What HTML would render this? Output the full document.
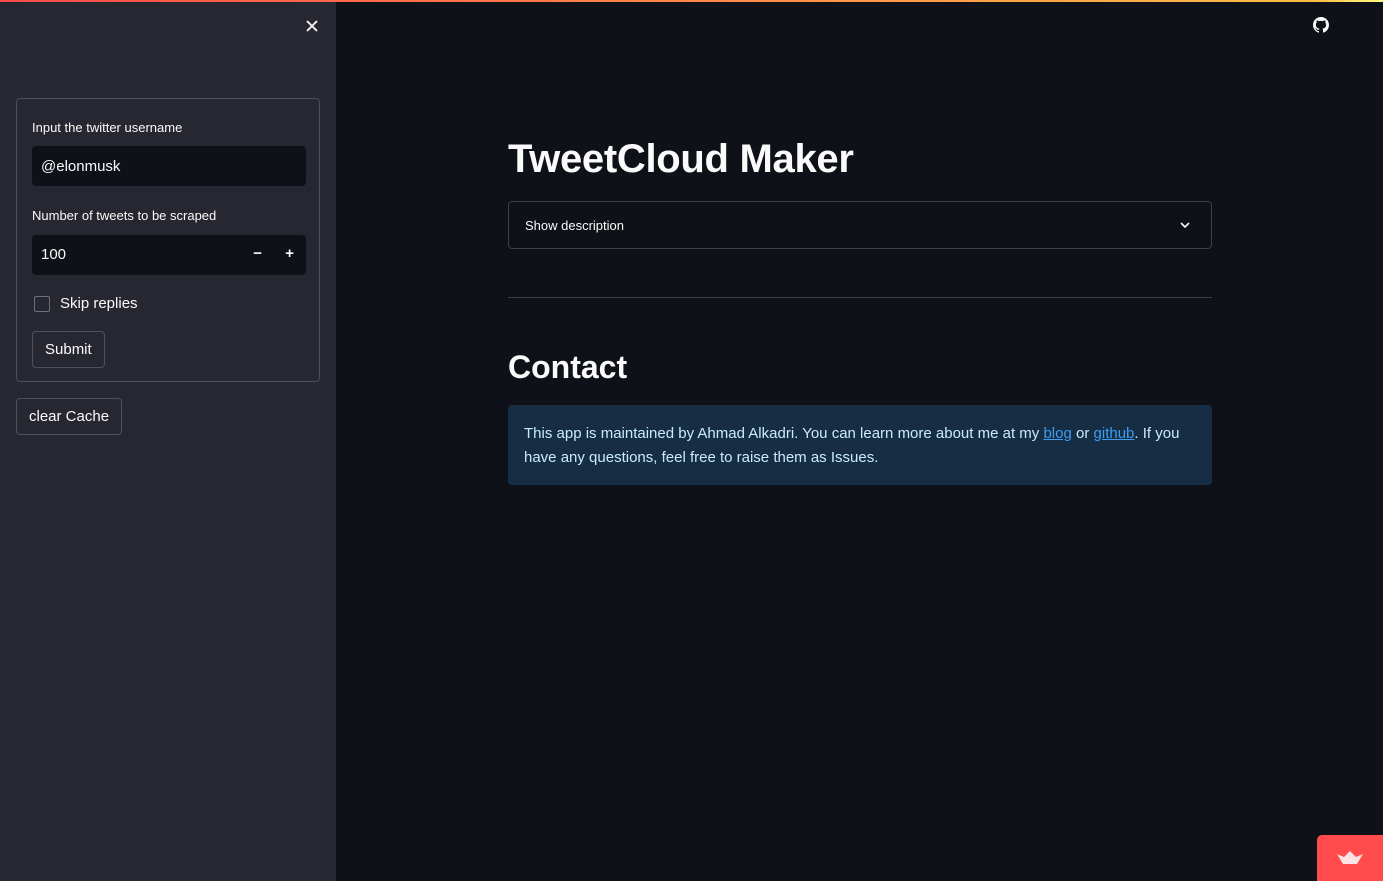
<!DOCTYPE html>
<html><head><meta charset="utf-8"><style>
*{box-sizing:border-box;margin:0;padding:0}
body{width:1383px;height:881px;overflow:hidden;background:#0e1117;font-family:"Liberation Sans",sans-serif;color:#fafafa;position:relative}
.top{position:absolute;top:0;left:0;right:0;height:2px;background:linear-gradient(90deg,#ff4b4b,#ffbd45 95%,#fffd80)}
.side{position:absolute;top:0;left:0;width:336px;bottom:0;background:#262730}
.form{position:absolute;left:16px;top:98px;width:304px;height:284px;border:1px solid rgba(250,250,250,0.2);border-radius:4px}
.lbl{position:absolute;font-size:13px;color:#fafafa}
.inp{position:absolute;left:15px;width:274px;height:40px;background:#0e1117;border-radius:4px;font-size:15px;padding:12px 9px}
.btn{position:absolute;border:1px solid rgba(250,250,250,0.2);border-radius:4px;font-size:15px;padding:0 12px;line-height:35px;background:#262730}
h1{position:absolute;left:508px;top:137px;font-size:40px;font-weight:700;letter-spacing:-0.3px}
h2{position:absolute;left:508px;top:349px;font-size:32px;font-weight:700}
.exp{position:absolute;left:508px;top:201px;width:704px;height:48px;border:1px solid rgba(250,250,250,0.2);border-radius:4px;font-size:13px;padding:16px}
.hr{position:absolute;left:508px;top:297px;width:704px;height:1px;background:rgba(250,250,250,0.2)}
.info{position:absolute;left:508px;top:405px;width:704px;height:80px;background:#172d43;border-radius:4px;padding:17px 16px;font-size:15px;line-height:24px;color:#c7ebff}
.info a{color:#3d9df3;text-decoration:underline}
.badge{position:absolute;right:0;bottom:0;width:66px;height:46px;background:#ff4b4b;border-top-left-radius:5px}
</style></head><body>
<div class="side">
<svg style="position:absolute;left:305px;top:19px" width="14" height="14" viewBox="0 0 14 14"><path d="M2 2L12 12M12 2L2 12" stroke="#fafafa" stroke-width="1.8"/></svg>
<div class="form">
<div class="lbl" style="left:15px;top:21px">Input the twitter username</div>
<div class="inp" style="top:47px">@elonmusk</div>
<div class="lbl" style="left:15px;top:109px">Number of tweets to be scraped</div>
<div class="inp" style="top:136px;padding-top:11px">100<span style="position:absolute;right:44px;top:10px;font-weight:700">−</span><span style="position:absolute;right:12px;top:10px;font-weight:700">+</span></div>
<div style="position:absolute;left:17px;top:197px;width:16px;height:16px;border:1px solid rgba(250,250,250,0.35);border-radius:2px"></div>
<div style="position:absolute;left:43px;top:196px;font-size:15px">Skip replies</div>
<div class="btn" style="left:15px;top:232px">Submit</div>
</div>
<div class="btn" style="left:16px;top:398px">clear Cache</div>
</div>
<div class="top"></div>
<svg style="position:absolute;left:1313px;top:17px" width="16" height="16" viewBox="0 0 16 16"><path fill="#fafafa" d="M8 0C3.58 0 0 3.58 0 8c0 3.54 2.290 6.53 5.47 7.59.4.07.55-.17.55-.38v-1.330c-2.23.48-2.7-1.070-2.7-1.070-.36-.92-.89-1.17-.89-1.17-.73-.5.05-.49.05-.49.8.06 1.23.83 1.23.83.72 1.22 1.87.87 2.33.67.07-.52.28-.87.51-1.07-1.78-.2-3.65-.89-3.65-3.95 0-.87.31-1.59.82-2.15-.08-.2-.36-1.02.08-2.12 0 0 .67-.21 2.2.82a7.6 7.6 0 014 0c1.53-1.04 2.2-.82 2.2-.82.44 1.1.16 1.92.08 2.12.51.56.82 1.27.82 2.15 0 3.07-1.87 3.75-3.65 3.95.29.25.54.73.54 1.48v2.2c0 .21.15.46.55.38A8.01 8.01 0 0016 8c0-4.42-3.58-8-8-8z"/></svg>
<h1>TweetCloud Maker</h1>
<div class="exp">Show description<svg style="position:absolute;right:20px;top:18px" width="12" height="10" viewBox="0 0 12 10"><path d="M2 3l4 4 4-4" stroke="#fafafa" stroke-width="1.6" fill="none"/></svg></div>
<div class="hr"></div>
<h2>Contact</h2>
<div class="info">This app is maintained by Ahmad Alkadri. You can learn more about me at my <a>blog</a> or <a>github</a>. If you have any questions, feel free to raise them as Issues.</div>
<div class="badge"><svg style="position:absolute;left:20px;top:16px" width="26" height="14" viewBox="0 0 26 14"><path d="M0 3L6 13H20L26 3L19 6L13 0L7 6Z" fill="#fde2e6"/></svg></div>
</body></html>
